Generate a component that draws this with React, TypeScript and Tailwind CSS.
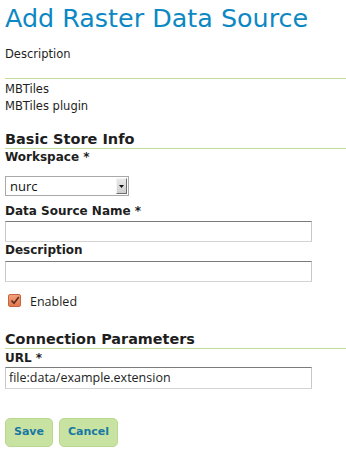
import React from "react";

const inputCls =
  "h-[21px] w-[307px] border border-t-[#7b7b7b] border-x-[#c9c9c9] border-b-[#d4d4d4] bg-white";

export default function App() {
  return (
    <div
      className="min-h-[468px] w-[346px] bg-white pl-[5px] text-[#1e1e1e]"
      style={{ fontFamily: '"DejaVu Sans", Verdana, sans-serif' }}
    >
      <h1 className="pt-[3px] text-[25.4px] leading-[30px] text-[#0c88c3]">
        Add Raster Data Source
      </h1>
      <p className="mt-[13px] text-[11.5px] leading-[16px]">Description</p>
      <div className="mt-[16px] h-px bg-[#c3de9c]" />
      <div className="mt-[2px] text-[11.5px] leading-[17px]">
        <div>MBTiles</div>
        <div>MBTiles plugin</div>
      </div>

      <h2 className="mt-[15px] border-b border-[#c3de9c] text-[14.5px] font-bold leading-[18px]">
        Basic Store Info
      </h2>
      <div className="mt-[1px] text-[12px] font-bold leading-[15px]">Workspace *</div>
      <div className="mt-[11px] flex h-[20px] w-[124px] items-center justify-between border border-[#a9a9a9] bg-white">
        <span
          className="pl-[4px] text-[13px] leading-[18px] text-[#111]"
          style={{ fontFamily: '"Open Sans", sans-serif' }}
        >
          nurc
        </span>
        <span className="mr-[1px] flex h-[16px] w-[11px] items-center justify-center border border-t-[#f4f4f4] border-l-[#f4f4f4] border-r-[#6e6e6e] border-b-[#6e6e6e] bg-gradient-to-b from-[#e9e9e9] to-[#cfcfcf]">
          <svg width="5" height="3" viewBox="0 0 5 3">
            <path d="M0 0h5L2.5 3z" fill="#111" />
          </svg>
        </span>
      </div>

      <div className="mt-[8px] text-[12px] font-bold leading-[15px]">Data Source Name *</div>
      <div className={`mt-[2px] ${inputCls}`} />
      <div className="mt-[1px] text-[12px] font-bold leading-[15px]">Description</div>
      <div className={`mt-[3px] ${inputCls}`} />

      <div className="mt-[11px] flex h-[14px] items-center">
        <span className="ml-[3px] flex h-[13px] w-[13px] items-center justify-center rounded-[2px] border border-[#c8633d] bg-gradient-to-b from-[#f2a07c] to-[#e0784e]">
          <svg width="10" height="9" viewBox="0 0 10 9">
            <path d="M1.5 4.5 L4 7.2 L8.8 1" fill="none" stroke="#5a2a18" strokeWidth="1.6" />
          </svg>
        </span>
        <span
          className="ml-[9px] mt-[3px] text-[12.5px] leading-[14px]"
          style={{ fontFamily: '"Open Sans", sans-serif' }}
        >
          Enabled
        </span>
      </div>

      <h2 className="mt-[23px] border-b border-[#c3de9c] text-[14.4px] font-bold leading-[18px]">
        Connection Parameters
      </h2>
      <div className="mt-[2px] text-[12px] font-bold leading-[15px]">URL *</div>
      <div className={`mt-[1px] flex items-center ${inputCls} h-[22px]`}>
        <span
          className="pl-[3px] text-[12.5px] leading-[18px] text-[#222]"
          style={{ fontFamily: '"Open Sans", sans-serif' }}
        >
          file:data/example.extension
        </span>
      </div>

      <div className="mt-[29px] flex gap-[6px]">
        <button className="h-[29px] w-[48px] rounded-[5px] border border-[#b9d88f] bg-[#c8e3a1] text-[11px] font-bold text-[#1877a3]">
          Save
        </button>
        <button className="h-[29px] w-[59px] rounded-[5px] border border-[#b9d88f] bg-[#c8e3a1] text-[11px] font-bold text-[#1877a3]">
          Cancel
        </button>
      </div>
    </div>
  );
}
